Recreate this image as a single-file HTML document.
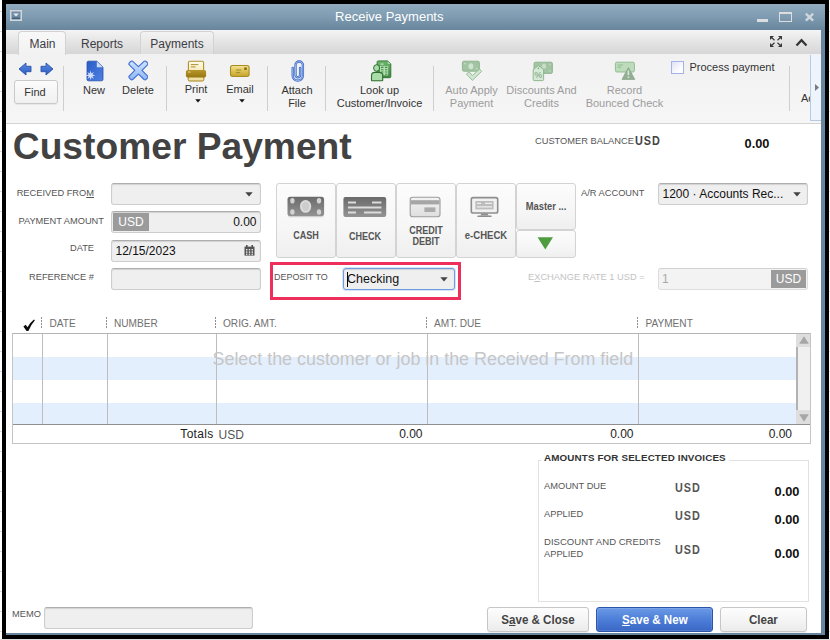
<!DOCTYPE html>
<html>
<head>
<meta charset="utf-8">
<title>Receive Payments</title>
<style>
*{box-sizing:border-box;margin:0;padding:0}
html,body{width:830px;height:640px;overflow:hidden;background:#fff}
body{font-family:"Liberation Sans",sans-serif;position:relative;color:#333}
.a{position:absolute}
.t{position:absolute;white-space:nowrap;line-height:14px;height:14px}
.c{text-align:center}
.r{text-align:right}
/* outer frame */
#frame{left:2px;top:0;width:827px;height:639px;background:#000}
#win{left:6px;top:4px;width:819px;height:631px;background:#fff;overflow:hidden}
#rb{left:821px;top:30px;width:4px;height:605px;background:#6886a0}
#bb{left:6px;top:633px;width:819px;height:2px;background:#6886a0}
#title{left:6px;top:4px;width:819px;height:26px;background:linear-gradient(#90abbf,#7e9bb1 50%,#67859c)}
#tabs{left:6px;top:30px;width:815px;height:25px;background:linear-gradient(#f4f4f4,#e4e4e4 50%,#d6d6d6);border-bottom:1px solid #b9cde3}
.tab{position:absolute;top:31px;height:24px;border:1px solid #d2d2d2;border-bottom:none;border-radius:4px 4px 0 0;background:linear-gradient(#f8f8f8,#f2f2f2)}
#tool{left:6px;top:54px;width:815px;height:70px;background:linear-gradient(#f1f1f1,#f6f6f6);border-bottom:1px solid #d4d4d4}
.sep{position:absolute;top:66px;width:1px;height:45px;background:#cfcfcf}
.tl{position:absolute;white-space:nowrap;font-size:11px;line-height:13px;height:13px;text-align:center;color:#333;transform:translateX(-50%)}
.dis{color:#9c9c9c}
.lbl{position:absolute;white-space:nowrap;font-size:9.9px;line-height:12px;height:12px;color:#555;transform:scaleX(.94);transform-origin:0 50%}
.lbl.r{transform-origin:100% 50%}
.inp{position:absolute;background:#efefef;border:1px solid #cdcdcd;border-top-color:#adadad;border-radius:3px;box-shadow:inset 0 1px 1px rgba(0,0,0,.12)}
.pbtn{position:absolute;border:1px solid #d3d3d3;border-radius:3px;background:linear-gradient(#fcfcfc,#f6f6f6 60%,#efefef)}
.pl{position:absolute;white-space:nowrap;font-size:10.3px;font-weight:bold;line-height:10px;color:#555;text-align:center;transform:translateX(-50%) scaleX(.88)}
.usd{position:absolute;font-weight:bold;font-size:12.6px;letter-spacing:1.1px;color:#555;line-height:14px;height:14px;white-space:nowrap;transform:scaleX(.86);transform-origin:0 50%}
.amt{position:absolute;font-weight:bold;font-size:12.8px;color:#111;line-height:14px;height:14px;white-space:nowrap;text-align:right}
.btn{position:absolute;height:25px;border:1px solid #c6c6c6;border-radius:3px;background:linear-gradient(#fdfdfd,#f3f3f3 60%,#ebebeb);font-size:12.3px;font-weight:bold;color:#444;text-align:center;line-height:24.2px;box-shadow:0 1px 1px rgba(0,0,0,.08)}
.bs{display:inline-block;transform:scaleX(.94)}
</style>
</head>
<body>
<!-- faint backdrop lines outside frame -->
<div class="a" style="left:0;top:0;width:830px;height:640px;background:repeating-linear-gradient(to bottom,#fff 0,#fff 19px,#d9d9d9 19px,#d9d9d9 20px);background-position:0 12px"></div>
<div class="a" style="left:0;top:639px;width:830px;height:1px;background:#dcdcdc"></div>
<div class="a" id="frame"></div>
<div class="a" id="win"></div>
<div class="a" id="title"></div>
<div class="a" id="tabs"></div>
<div class="a" id="tool"></div>
<div class="a" id="rb"></div>
<div class="a" id="bb"></div>

<!-- TITLE BAR -->
<div class="t c" style="left:289.3px;width:200px;top:9px;font-size:13px;line-height:16px;height:16px;color:#fff">Receive Payments</div>

<!-- sys menu icon -->
<svg class="a" style="left:10px;top:10px" width="12" height="11" viewBox="0 0 12 11"><rect x="0.75" y="0.75" width="10.5" height="9.5" fill="#6b8ba6" stroke="#d3d7da" stroke-width="1.5"/><path d="M3 3.6h6l-3 3z" fill="#e8ecef"/><rect x="2" y="7.6" width="8" height="1.2" fill="#3e566b"/></svg>
<!-- min / max / close -->
<div class="a" style="left:757px;top:19px;width:11px;height:3px;background:#dcdde0"></div>
<div class="a" style="left:779px;top:12px;width:13px;height:10px;border:1.5px solid #dcdde0;border-top-width:2px"></div>
<svg class="a" style="left:803.5px;top:12.300px" width="11" height="10.200" viewBox="0 0 12 11"><path d="M2 1.8L10 9.4M10 1.8L2 9.4" stroke="#cfd6dc" stroke-width="2.6" stroke-linecap="butt"/></svg>
<!-- expand + chevron -->
<svg class="a" style="left:769px;top:35px" width="14" height="13" viewBox="0 0 14 13"><g fill="#3a3a3a" stroke="#3a3a3a" stroke-width="1.2"><path d="M1 1h4L1 5z" stroke="none"/><path d="M13 1H9l4 4z" stroke="none"/><path d="M1 12h4L1 8z" stroke="none"/><path d="M13 12H9l4-4z" stroke="none"/><path d="M2 2l3.5 3.2M12 2L8.5 5.2M2 11l3.5-3.2M12 11L8.5 7.8" fill="none"/></g></svg>
<svg class="a" style="left:795px;top:38px" width="13" height="9" viewBox="0 0 13 9"><path d="M1.5 7.5L6.5 2.2L11.5 7.5" fill="none" stroke="#333" stroke-width="2.2"/></svg>


<!-- TABS -->

<div class="tab" style="left:18px;width:48px"></div>
<div class="tab" style="left:140px;width:73.5px;height:23px;background:linear-gradient(#f3f3f3,#e6e6e6 60%,#dedede)"></div>
<div class="t c" style="left:19px;width:47px;top:37px;font-size:12px;color:#3c3c44">Main</div>
<div class="t c" style="left:72px;width:60px;top:37px;font-size:12px;color:#3c3c44">Reports</div>
<div class="t c" style="left:140px;width:74px;top:37px;font-size:12px;color:#3c3c44">Payments</div>


<!-- TOOLBAR -->

<svg width="0" height="0" style="position:absolute"><defs>
<linearGradient id="gBlue" x1="0" y1="0" x2="0" y2="1"><stop offset="0" stop-color="#5b8be6"/><stop offset="1" stop-color="#2b5cc0"/></linearGradient>
<linearGradient id="gDoc" x1="0" y1="0" x2="1" y2="1"><stop offset="0" stop-color="#2a5cc8"/><stop offset="1" stop-color="#4f80e2"/></linearGradient>
<linearGradient id="gX" x1="0" y1="0" x2="0" y2="1"><stop offset="0" stop-color="#cfe2ff"/><stop offset="1" stop-color="#8fb6f4"/></linearGradient>
<linearGradient id="gGold" x1="0" y1="0" x2="0" y2="1"><stop offset="0" stop-color="#b8962a"/><stop offset="1" stop-color="#96760f"/></linearGradient>
<linearGradient id="gEnv" x1="0" y1="0" x2="0" y2="1"><stop offset="0" stop-color="#f3e59a"/><stop offset="0.5" stop-color="#dcc254"/><stop offset="1" stop-color="#c4a32e"/></linearGradient>
<linearGradient id="gPaper" x1="0" y1="0" x2="0" y2="1"><stop offset="0" stop-color="#fffdf0"/><stop offset="1" stop-color="#f3e6b0"/></linearGradient>
<linearGradient id="gCash" x1="0" y1="0" x2="0" y2="1"><stop offset="0" stop-color="#6a6a6a"/><stop offset="1" stop-color="#939393"/></linearGradient>
<linearGradient id="gCard" x1="0" y1="0" x2="0" y2="1"><stop offset="0" stop-color="#d8d8d8"/><stop offset="1" stop-color="#f2f2f2"/></linearGradient>
</defs></svg>
<!-- nav arrows -->
<svg class="a" style="left:18px;top:62px" width="14" height="14" viewBox="0 0 14 14"><path d="M1 7L8 1V4.3H13V9.7H8V13Z" fill="url(#gBlue)" stroke="#2a52a8" stroke-width="0.9" stroke-linejoin="round"/></svg>
<svg class="a" style="left:40px;top:62px" width="14" height="14" viewBox="0 0 14 14"><path d="M13 7L6 1V4.3H1V9.7H6V13Z" fill="url(#gBlue)" stroke="#2a52a8" stroke-width="0.9" stroke-linejoin="round"/></svg>
<div class="a" style="left:14px;top:80px;width:44px;height:24px;border:1px solid #c9c9c9;border-radius:3px;background:linear-gradient(#fbfbfb,#f0f0f0);box-shadow:0 1px 0 rgba(0,0,0,.05)"></div>
<div class="tl" style="left:35px;top:85.5px">Find</div>
<div class="sep" style="left:63px"></div>
<!-- New -->
<svg class="a" style="left:85px;top:60px" width="20" height="22" viewBox="0 0 20 22"><path d="M3.4 1.200H11.8L18 7.200V19.400Q18 20.800 16.600 20.800H3.400Q2 20.800 2 19.400V2.600Q2 1.200 3.400 1.200Z" fill="url(#gDoc)" stroke="#2450b0" stroke-width="0.8"/><path d="M11.800 1.400V7.200H17.800Z" fill="#cbdcf8"/><path d="M5.600 10.600L6.400 13.500L8.900 11.900L7.500 14.500L10.400 15.400L7.500 16.200L8.900 18.900L6.400 17.200L5.600 20.200L4.800 17.200L2.300 18.900L3.700 16.200L0.800 15.400L3.700 14.500L2.300 11.900L4.800 13.500Z" fill="#cfdefa"/></svg>
<div class="tl" style="left:94px;top:83.5px">New</div>
<!-- Delete -->
<svg class="a" style="left:127.600px;top:60.400px" width="20.800" height="20.800" viewBox="0 0 22 22"><path d="M5 1.400L11 7L17 1.400Q18.200 0.600 19.200 1.600L20.600 3Q21.600 4.200 20.600 5.200L14.800 11L20.600 16.800Q21.600 17.800 20.600 19L19.200 20.400Q18.200 21.400 17 20.600L11 15L5 20.600Q3.800 21.400 2.800 20.400L1.400 19Q0.400 17.800 1.400 16.800L7.200 11L1.400 5.200Q0.400 4.200 1.400 3L2.800 1.600Q3.800 0.600 5 1.400Z" fill="url(#gX)" stroke="#3f6fd0" stroke-width="1.200" stroke-linejoin="round"/></svg>
<div class="tl" style="left:138px;top:83.5px">Delete</div>
<div class="sep" style="left:165.500px"></div>
<!-- Print -->
<svg class="a" style="left:185px;top:60px" width="22" height="22" viewBox="0 0 22 22"><rect x="3.4" y="1.3" width="15.2" height="11" rx="1.6" fill="url(#gPaper)" stroke="#b09028" stroke-width="1.1"/><path d="M5.8 4.6H13.4M5.8 6.9H10.6" stroke="#a4841c" stroke-width="0.9"/><rect x="3.2" y="15" width="15.6" height="6" rx="1.4" fill="#efe0a4" stroke="#a4841c" stroke-width="1"/><rect x="0.9" y="10" width="20.2" height="7.6" rx="1.8" fill="url(#gGold)"/><rect x="3.3" y="11.6" width="2.2" height="0.9" fill="#f1e4b0"/></svg>
<div class="tl" style="left:196px;top:82.5px">Print</div>
<svg class="a" style="left:195px;top:99px" width="6" height="4" viewBox="0 0 6 4"><path d="M0.2 0.2H5.8L3 3.6Z" fill="#111"/></svg>
<!-- Email -->
<svg class="a" style="left:229px;top:64px" width="22" height="14" viewBox="0 0 22 14"><rect x="1.5" y="1.5" width="18.6" height="11" rx="2.2" fill="url(#gEnv)" stroke="#a88c22" stroke-width="1.1"/><path d="M7 6H12.2M7 8.6H11.2" stroke="#a08422" stroke-width="0.9"/><rect x="15.2" y="3.4" width="2.6" height="2.6" fill="#8c6e12"/></svg>
<div class="tl" style="left:240px;top:82.5px">Email</div>
<svg class="a" style="left:239px;top:99px" width="6" height="4" viewBox="0 0 6 4"><path d="M0.2 0.2H5.8L3 3.6Z" fill="#111"/></svg>
<div class="sep" style="left:267px"></div>
<!-- Attach -->
<svg class="a" style="left:290px;top:60px" width="16" height="23" viewBox="0 0 16 23"><path d="M2.7 8V15.6A5.1 5.1 0 0 0 12.9 15.600V5.200A3.7 3.700 0 0 0 5.500 5.200V15A2.3 2.300 0 0 0 10.100 15V8" fill="none" stroke="#3564c6" stroke-width="2.3" stroke-linecap="round"/><path d="M2.7 8V15.6A5.1 5.1 0 0 0 12.9 15.600V5.200A3.7 3.700 0 0 0 5.500 5.200V15A2.3 2.300 0 0 0 10.100 15V8" fill="none" stroke="#b5cef6" stroke-width="0.8" stroke-linecap="round"/></svg>
<div class="tl" style="left:297px;top:83.5px">Attach</div>
<div class="tl" style="left:297px;top:96.5px">File</div>
<div class="sep" style="left:325px"></div>
<!-- Look up -->
<svg class="a" style="left:370px;top:60px" width="23" height="22" viewBox="0 0 23 22"><defs><linearGradient id="gSheet" x1="0" y1="0" x2="0" y2="1"><stop offset="0" stop-color="#6db56d"/><stop offset="1" stop-color="#3d873d"/></linearGradient></defs><path d="M8.300 0.900H17.800L20.800 3.900V16.500Q20.800 17.700 19.600 17.700H8.300Q7.100 17.700 7.100 16.500V2.100Q7.100 0.900 8.300 0.900Z" fill="url(#gSheet)" stroke="#2f6e2f" stroke-width="0.9"/><path d="M17.800 1.100V3.900H20.600Z" fill="#a9d6a9"/><rect x="10" y="5.900" width="8.200" height="9.500" fill="#b2ddb2"/><path d="M10.400 4.100H13.600" stroke="#d2eed2" stroke-width="1"/><path d="M11 7.400H13.500M15 7.400H17.400M11 9.700H13.500M15 9.700H17.400M11 12H13.500M15 12H17.400M11 14.200H13.500M15 14.200H17.400" stroke="#468f46" stroke-width="1.100"/><ellipse cx="6.600" cy="8" rx="3" ry="3.300" fill="#a9dca9" stroke="#2f6e2f" stroke-width="1"/><path d="M1.500 20.200V15.700Q1.500 12.400 4.900 12.400H9.300Q12.700 12.400 12.700 15.700V20.200Q12.700 20.700 12.200 20.700H2Q1.500 20.700 1.500 20.200Z" fill="#a9dca9" stroke="#2f6e2f" stroke-width="1.100"/></svg>
<div class="tl" style="left:379.5px;top:83.5px">Look up</div>
<div class="tl" style="left:379.5px;top:96.5px">Customer/Invoice</div>
<div class="sep" style="left:433px"></div>
<!-- Auto Apply -->
<svg class="a" style="left:461px;top:60px" width="22" height="22" viewBox="0 0 22 22"><rect x="1.4" y="1.2" width="17" height="10" rx="1.4" fill="#a3c4a3" stroke="#8db28d" stroke-width="0.9"/><ellipse cx="9.9" cy="6.2" rx="2.4" ry="3" fill="#cfe4cf"/><circle cx="4" cy="3.6" r="0.9" fill="#c4dcc4"/><circle cx="15.8" cy="8.8" r="0.9" fill="#c4dcc4"/><path d="M5.4 14L8 11.8L11.4 15.6L18.6 9L20.6 11.4L11.4 20.4Z" fill="#d2e6d2" stroke="#8cb88c" stroke-width="0.9" stroke-linejoin="round"/></svg>
<div class="tl dis" style="left:471.5px;top:83.5px">Auto Apply</div>
<div class="tl dis" style="left:471.5px;top:96.5px">Payment</div>
<!-- Discounts -->
<svg class="a" style="left:532px;top:60px" width="22" height="22" viewBox="0 0 22 22"><rect x="2" y="2.2" width="18.4" height="11.2" rx="1.4" fill="#a3c4a3" stroke="#8db28d" stroke-width="0.9"/><ellipse cx="12" cy="6.2" rx="2.2" ry="2.6" fill="#c6dec6"/><circle cx="18" cy="4.6" r="0.8" fill="#c4dcc4"/><circle cx="18" cy="11" r="0.8" fill="#c4dcc4"/><path d="M1.2 9.6L6.4 5.6L11.6 9.6V19.6Q11.6 20.6 10.6 20.6H2.2Q1.2 20.6 1.2 19.6Z" fill="#d6e8d6" stroke="#86b286" stroke-width="0.9"/><text x="6.4" y="17.6" font-family="Liberation Sans, sans-serif" font-size="8.5" text-anchor="middle" fill="#6f9a6f">%</text><circle cx="6.4" cy="8.4" r="0.8" fill="#7ea87e"/></svg>
<div class="tl dis" style="left:541.5px;top:83.5px">Discounts And</div>
<div class="tl dis" style="left:541.5px;top:96.5px">Credits</div>
<!-- Record bounced -->
<svg class="a" style="left:614px;top:60px" width="23" height="22" viewBox="0 0 23 22"><rect x="1.4" y="2.2" width="19" height="9.8" rx="1.4" fill="#bcdcbc" stroke="#8cb88c" stroke-width="0.9"/><path d="M3.6 5H9M3.6 7.2H7" stroke="#8cb88c" stroke-width="0.9"/><path d="M14.4 7.6L20.8 19.4H8Z" fill="#93ae93" stroke="#8aa68a" stroke-width="0.8" stroke-linejoin="round"/><path d="M14.4 10.4V15.2M14.4 16.6V18" stroke="#d4e6d4" stroke-width="1.7"/></svg>
<div class="tl dis" style="left:624.5px;top:83.5px">Record</div>
<div class="tl dis" style="left:624.5px;top:96.5px">Bounced Check</div>
<!-- checkbox -->
<div class="a" style="left:671px;top:61px;width:13px;height:13px;border:1px solid #a5b2e6;background:linear-gradient(135deg,#dfe0f6,#fdfdff 70%)"></div>
<div class="t" style="left:689.5px;top:60.5px;font-size:11px;line-height:13px;color:#333">Process payment</div>
<div class="sep" style="left:789px"></div>
<div class="t" style="left:801px;top:92px;font-size:11px;line-height:13px;color:#333">Ac</div>
<!-- scroller -->
<div class="a" style="left:810px;top:55px;width:11px;height:66px;background:#eef4fb;border:1px solid #b4cbe6;border-top:none;border-right:none"></div>
<svg class="a" style="left:815px;top:84px" width="4" height="7" viewBox="0 0 4 7"><path d="M0 0L4 3.5L0 7Z" fill="#7a7a7a"/></svg>


<!-- FORM -->

<div class="t" style="left:12.8px;top:121.7px;font-size:37.2px;font-weight:bold;line-height:48px;height:48px;color:#424242">Customer Payment</div>
<div class="lbl" style="left:535px;top:134.5px">CUSTOMER BALANCE</div>
<div class="usd" style="left:634.5px;top:133.5px;color:#444">USD</div>
<div class="amt" style="left:700px;width:69.5px;top:136.5px">0.00</div>

<div class="lbl r" style="left:0;width:94px;top:187px">RECEIVED FRO<u>M</u></div>
<div class="lbl r" style="left:0;width:104px;top:214.5px">PAYMENT AMOUNT</div>
<div class="lbl r" style="left:0;width:94px;top:242px">DATE</div>
<div class="lbl r" style="left:0;width:94px;top:270.5px">REFERENCE #</div>
<div class="inp" style="left:111px;top:183px;width:150px;height:22px"></div>
<svg class="a" style="left:245px;top:192px" width="8" height="5" viewBox="0 0 8 5"><path d="M0.3 0.3H7.7L4 4.6Z" fill="#444"/></svg>
<div class="inp" style="left:111px;top:211px;width:150px;height:22px"></div>
<div class="a" style="left:113px;top:213px;width:36px;height:18px;background:#9b9b9b"></div>
<div class="t c" style="left:113px;width:36px;top:215px;font-size:12px;color:#fff">USD</div>
<div class="t r" style="left:200px;width:56.5px;top:215px;font-size:12px;color:#111">0.00</div>
<div class="inp" style="left:111px;top:240px;width:150px;height:22px"></div>
<div class="t" style="left:115.5px;top:243.5px;font-size:12px;color:#111">12/15/2023</div>
<svg class="a" style="left:244px;top:245px" width="11" height="11" viewBox="0 0 11 11"><rect x="0.5" y="1.6" width="10" height="9" fill="#555"/><rect x="2" y="0" width="1.6" height="2.6" fill="#555"/><rect x="7.4" y="0" width="1.6" height="2.6" fill="#555"/><g fill="#eee"><rect x="2" y="4" width="1.4" height="1.4"/><rect x="4.8" y="4" width="1.4" height="1.4"/><rect x="7.6" y="4" width="1.4" height="1.4"/><rect x="2" y="6.4" width="1.4" height="1.4"/><rect x="4.8" y="6.4" width="1.4" height="1.4"/><rect x="7.6" y="6.4" width="1.4" height="1.4"/><rect x="2" y="8.6" width="1.4" height="1.2"/><rect x="4.8" y="8.6" width="1.4" height="1.2"/><rect x="7.6" y="8.6" width="1.4" height="1.2"/></g></svg>
<div class="inp" style="left:111px;top:268px;width:150px;height:22px"></div>

<!-- payment method buttons -->
<div class="pbtn" style="left:276px;top:183px;width:60px;height:75px"></div>
<div class="pbtn" style="left:336px;top:183px;width:60px;height:75px"></div>
<div class="pbtn" style="left:396px;top:183px;width:60px;height:75px"></div>
<div class="pbtn" style="left:456px;top:183px;width:60px;height:75px"></div>
<div class="pbtn" style="left:516px;top:183px;width:60px;height:47px"></div>
<div class="pbtn" style="left:516px;top:230px;width:60px;height:28px"></div>
<!-- cash icon -->
<svg class="a" style="left:287px;top:196px" width="38" height="23" viewBox="0 0 38 23"><rect x="1" y="19" width="35.600" height="2.400" rx="1" fill="#e3e3e3"/><rect x="0.500" y="0.800" width="36.600" height="19.400" rx="2.600" fill="url(#gCash)"/><ellipse cx="18.600" cy="10.400" rx="5.600" ry="6.400" fill="#dcdcdc"/><ellipse cx="18.600" cy="10.400" rx="3.600" ry="4.600" fill="#cdcdcd"/><ellipse cx="5.400" cy="4.800" rx="2.200" ry="2.800" fill="#d2d2d2"/><ellipse cx="5.400" cy="16" rx="2.200" ry="2.800" fill="#d2d2d2"/><ellipse cx="32" cy="4.800" rx="2.200" ry="2.800" fill="#d2d2d2"/><ellipse cx="32" cy="16" rx="2.200" ry="2.800" fill="#d2d2d2"/></svg>
<div class="pl" style="left:305.5px;top:230.5px">CASH</div>
<!-- check icon -->
<svg class="a" style="left:343px;top:196px" width="44" height="22" viewBox="0 0 44 22"><rect x="0.4" y="1" width="42.8" height="20" rx="2" fill="url(#gCash)"/><path d="M5 6.4H13M29 6.4H38.4M5 11.4H38.4M5 16.4H13M21 16.4H38.4" stroke="#dcdcdc" stroke-width="2"/></svg>
<div class="pl" style="left:365px;top:232px">CHECK</div>
<!-- card icon -->
<svg class="a" style="left:409px;top:196px" width="33" height="22" viewBox="0 0 33 22"><rect x="1.200" y="1.200" width="29.800" height="19.600" rx="2.600" fill="url(#gCard2)" stroke="#9c9c9c" stroke-width="1.100"/><rect x="1.700" y="4.200" width="28.800" height="4.200" fill="#a6a6a6"/><rect x="15.400" y="11.400" width="11" height="4.600" fill="#ababab"/><defs><linearGradient id="gCard2" x1="0" y1="0" x2="0" y2="1"><stop offset="0" stop-color="#f4f4f4"/><stop offset="1" stop-color="#dedede"/></linearGradient></defs></svg>
<div class="pl" style="left:425.5px;top:226px">CREDIT</div>
<div class="pl" style="left:425.5px;top:236.5px">DEBIT</div>
<!-- echeck icon -->
<svg class="a" style="left:470px;top:196px" width="29" height="22" viewBox="0 0 29 22"><rect x="1.3" y="1.6" width="26.4" height="15.4" rx="1.8" fill="#f1f1f1" stroke="#8e8e8e" stroke-width="1.6"/><rect x="5.4" y="5" width="18.2" height="8.4" fill="#bdbdbd"/><path d="M7 7.4H11M15 7.4H22M7 10.8H22" stroke="#efefef" stroke-width="1.3"/><path d="M11.4 17.4H17.6L18.6 19.6H10.4Z" fill="#8e8e8e"/><rect x="7.4" y="19.4" width="14.2" height="1.7" rx="0.6" fill="#8e8e8e"/></svg>
<div class="pl" style="left:485.800px;top:230.500px;transform:translateX(-50%) scaleX(.925)">e-CHECK</div>
<div class="pl" style="left:545.5px;top:201.5px;font-size:10.4px;transform:translateX(-50%) scaleX(.9)">Master ...</div>
<svg class="a" style="left:537px;top:237px" width="17" height="13" viewBox="0 0 17 13"><path d="M0.6 0.3H16L8.3 12.4Z" fill="#4f9c3f"/></svg>

<div class="lbl" style="left:581px;top:186.5px">A/R ACCOUNT</div>
<div class="inp" style="left:658px;top:183px;width:150px;height:22px"></div>
<div class="t" style="left:662.5px;top:186.5px;font-size:12px;color:#111">1200 &middot; Accounts Rec...</div>
<svg class="a" style="left:793px;top:192px" width="8" height="5" viewBox="0 0 8 5"><path d="M0.3 0.3H7.7L4 4.6Z" fill="#444"/></svg>

<!-- deposit to highlight -->
<div class="a" style="left:270px;top:262px;width:191px;height:38px;border:3px solid #ee2f5c"></div>
<div class="lbl" style="left:273.800px;top:270.500px;transform:scaleX(.905)">DEPOSIT TO</div>
<div class="a" style="left:343px;top:268px;width:112px;height:22px;border:1px solid #6e9be0;border-radius:3px;background:#efefef;box-shadow:inset 0 1px 1px rgba(0,0,0,.12),0 0 0 1px rgba(140,175,230,.35)"></div>
<div class="a" style="left:346.5px;top:272px;width:1px;height:15px;background:#000"></div>
<div class="t" style="left:347px;top:272px;font-size:12.5px;color:#111">Checking</div>
<svg class="a" style="left:440px;top:277px" width="8" height="5" viewBox="0 0 8 5"><path d="M0.3 0.3H7.7L4 4.6Z" fill="#444"/></svg>

<div class="lbl" style="left:527.5px;top:270.5px;color:#c3c3c3">E<u>X</u>CHANGE RATE 1 USD =</div>
<div class="a" style="left:658px;top:268px;width:150px;height:22px;background:#f3f3f3;border:1px solid #dedede;border-top-color:#d0d0d0;border-radius:3px"></div>
<div class="t" style="left:662px;top:272px;font-size:12px;color:#aaa">1</div>
<div class="a" style="left:771px;top:270px;width:35px;height:18px;background:#9b9b9b"></div>
<div class="t c" style="left:771px;width:35px;top:272px;font-size:12px;color:#fff">USD</div>


<!-- TABLE -->

<!-- header -->
<svg class="a" style="left:23px;top:318.500px" width="12.500" height="12.500" viewBox="0 0 13 13"><path d="M0.400 7.800L2.800 5.900L4.700 8.600Q7.600 3.200 11.400 0.400L12.400 1.300Q8.600 5.600 5.600 12.400H3.700Z" fill="#0c0c0c"/></svg>
<div class="a" style="left:40.9px;top:317px;width:1.2px;height:10.6px;background:repeating-linear-gradient(to bottom,#8e8e8e 0,#8e8e8e 1.600px,transparent 1.600px,transparent 3px)"></div>
<div class="a" style="left:105.9px;top:317px;width:1.2px;height:10.6px;background:repeating-linear-gradient(to bottom,#8e8e8e 0,#8e8e8e 1.600px,transparent 1.600px,transparent 3px)"></div>
<div class="a" style="left:214.9px;top:317px;width:1.2px;height:10.6px;background:repeating-linear-gradient(to bottom,#8e8e8e 0,#8e8e8e 1.600px,transparent 1.600px,transparent 3px)"></div>
<div class="a" style="left:425.9px;top:317px;width:1.2px;height:10.6px;background:repeating-linear-gradient(to bottom,#8e8e8e 0,#8e8e8e 1.600px,transparent 1.600px,transparent 3px)"></div>
<div class="a" style="left:636.9px;top:317px;width:1.2px;height:10.6px;background:repeating-linear-gradient(to bottom,#8e8e8e 0,#8e8e8e 1.600px,transparent 1.600px,transparent 3px)"></div>
<div class="lbl" style="left:49.5px;top:317.5px;font-size:10.1px;color:#707070;transform:none">DATE</div>
<div class="lbl" style="left:114px;top:317.5px;font-size:10.1px;color:#707070;transform:none">NUMBER</div>
<div class="lbl" style="left:223px;top:317.5px;font-size:10.1px;color:#707070;transform:none">ORIG. AMT.</div>
<div class="lbl" style="left:434px;top:317.5px;font-size:10.1px;color:#707070;transform:none">AMT. DUE</div>
<div class="lbl" style="left:645.5px;top:317.5px;font-size:10.1px;color:#707070;transform:none">PAYMENT</div>
<!-- grid -->
<div class="a" style="left:12px;top:333px;width:799px;height:111px;border:1px solid #c4c4c4;border-top-color:#b4b4b4;background:#fff"></div>
<div class="a" style="left:13px;top:357px;width:783px;height:23px;background:#e4effd"></div>
<div class="a" style="left:13px;top:403px;width:783px;height:21px;background:#e4effd"></div>
<div class="a" style="left:42px;top:334px;width:1px;height:90px;background:#bdbdbd"></div>
<div class="a" style="left:107px;top:334px;width:1px;height:90px;background:#bdbdbd"></div>
<div class="a" style="left:216px;top:334px;width:1px;height:90px;background:#bdbdbd"></div>
<div class="a" style="left:427px;top:334px;width:1px;height:90px;background:#bdbdbd"></div>
<div class="a" style="left:638px;top:334px;width:1px;height:90px;background:#bdbdbd"></div>
<div class="a" style="left:13px;top:424px;width:797px;height:1px;background:#8f8f8f"></div>
<!-- scrollbar -->
<div class="a" style="left:796px;top:334px;width:14px;height:90px;background:#f0f0f0"></div>
<div class="a" style="left:796px;top:334px;width:14px;height:13px;background:#dedede"></div>
<div class="a" style="left:796px;top:410px;width:14px;height:14px;background:#dedede"></div>
<div class="a" style="left:796px;top:347px;width:1.5px;height:63px;background:#b2b2b2"></div>
<svg class="a" style="left:798.5px;top:336px" width="10" height="8" viewBox="0 0 10 8"><path d="M5 0.2L9.8 7.8H0.2Z" fill="#a6a6a6"/></svg>
<svg class="a" style="left:798.5px;top:414px" width="10" height="8" viewBox="0 0 10 8"><path d="M5 7.8L9.8 0.2H0.2Z" fill="#a6a6a6"/></svg>
<div class="t" style="left:212.5px;top:349px;font-size:17.9px;line-height:20px;height:20px;color:#c6c6c6">Select the customer or job in the Received From field</div>
<!-- totals -->
<div class="t r" style="left:150px;width:63.5px;top:427px;font-size:12px;color:#222;letter-spacing:.3px">Totals</div>
<div class="t" style="left:218.5px;top:427.5px;font-size:12px;color:#555">USD</div>
<div class="t r" style="left:360px;width:62.5px;top:427px;font-size:12px;color:#222">0.00</div>
<div class="t r" style="left:570px;width:63.5px;top:427px;font-size:12px;color:#222">0.00</div>
<div class="t r" style="left:730px;width:62px;top:427px;font-size:12px;color:#222">0.00</div>


<!-- BOTTOM -->

<div class="a" style="left:538px;top:460px;width:271px;height:142px;border:1px solid #e1e1e1"></div>
<div class="a" style="left:541px;top:452px;width:188px;height:12px;background:#fff"></div>
<div class="t" style="left:544px;top:450.5px;font-size:9.8px;font-weight:bold;color:#333;letter-spacing:.15px">AMOUNTS FOR SELECTED INVOICES</div>
<div class="lbl" style="left:544px;top:479.5px">AMOUNT DUE</div>
<div class="usd" style="left:674.5px;top:480.5px">USD</div>
<div class="amt" style="left:730px;width:69.5px;top:484.5px">0.00</div>
<div class="lbl" style="left:544px;top:507.5px">APPLIED</div>
<div class="usd" style="left:674.5px;top:508.5px">USD</div>
<div class="amt" style="left:730px;width:69.5px;top:512.5px">0.00</div>
<div class="lbl" style="left:544px;top:536px;transform:scaleX(.968)">DISCOUNT AND CREDITS</div>
<div class="lbl" style="left:544px;top:547.5px">APPLIED</div>
<div class="usd" style="left:674.5px;top:542.5px">USD</div>
<div class="amt" style="left:730px;width:69.5px;top:546.5px">0.00</div>

<div class="lbl" style="left:12px;top:608px">MEMO</div>
<div class="inp" style="left:44px;top:607px;width:209px;height:22px"></div>

<div class="btn" style="left:487px;top:607px;width:102px"><span class="bs">S<u>a</u>ve &amp; Close</span></div>
<div class="btn" style="left:596px;top:607px;width:117px;border-color:#2b55a6;background:linear-gradient(#6b9ae6,#4d7ed8 50%,#3a67c6);box-shadow:inset 0 0 0 1px rgba(255,255,255,.12);color:#fff"><span class="bs"><u>S</u>ave &amp; New</span></div>
<div class="btn" style="left:720px;top:607px;width:87px"><span class="bs">Clear</span></div>

</body>
</html>
